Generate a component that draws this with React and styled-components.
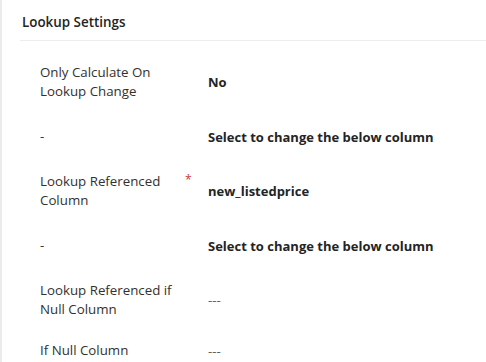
import styled, { createGlobalStyle } from "styled-components"

const Global = createGlobalStyle`
  body {
    margin: 0;
    background: #fff;
    font-family: "Open Sans", "Noto Sans", sans-serif;
    color: #323130;
  }
`

const Panel = styled.div`
  width: 486px;
  height: 362px;
  box-sizing: border-box;
  border-left: 2px solid #ebebeb;
  overflow: hidden;
`

const Header = styled.div`
  margin-left: 18px;
  padding: 13px 0 0 2px;
  height: 41px;
  box-sizing: border-box;
  border-bottom: 1px solid #ededed;
  font-size: 13.4px;
  font-weight: 600;
  color: #242424;
`

const Rows = styled.div`
  display: flex;
  flex-direction: column;
  padding: 14px 0 0 38px;
`

const Row = styled.div`
  display: grid;
  grid-template-columns: 168px 1fr;
  align-items: center;
  height: ${(p) => (p.$last ? "47px" : "54.5px")};
`

const Label = styled.div`
  position: relative;
  font-size: 13.3px;
  line-height: 19.5px;
  width: 140px;
  color: #323130;
`

const Required = styled.span`
  position: absolute;
  left: 145px;
  top: -2px;
  color: #d13438;
  font-size: 12px;
`

const Value = styled.div`
  font-size: ${(p) => (p.$empty ? "13.3px" : "13px")};
  font-weight: ${(p) => (p.$empty ? 400 : 700)};
  color: ${(p) => (p.$empty ? "#605e5c" : "#242424")};
`

const rows = [
  { label: "Only Calculate On Lookup Change", value: "No" },
  { label: "-", value: "Select to change the below column" },
  { label: "Lookup Referenced Column", value: "new_listedprice", required: true },
  { label: "-", value: "Select to change the below column" },
  { label: "Lookup Referenced if Null Column", value: "---", empty: true },
  { label: "If Null Column", value: "---", empty: true },
]

export default function App() {
  return (
    <Panel>
      <Global />
      <Header>Lookup Settings</Header>
      <Rows>
        {rows.map((r, i) => (
          <Row key={i} $last={i === rows.length - 1}>
            <Label>
              {r.label}
              {r.required && <Required>*</Required>}
            </Label>
            <Value $empty={r.empty}>{r.value}</Value>
          </Row>
        ))}
      </Rows>
    </Panel>
  )
}
